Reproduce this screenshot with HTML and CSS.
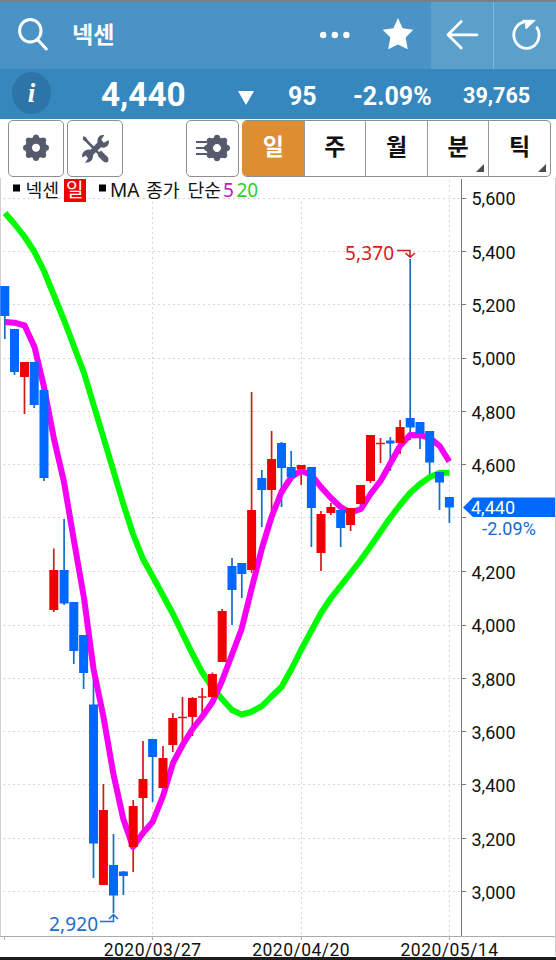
FILE: index.html
```html
<!DOCTYPE html>
<html lang="ko">
<head>
<meta charset="utf-8">
<title>넥센</title>
<link rel="stylesheet" href="styles.css">
</head>
<body>
<header class="topbar">
  <svg class="search" viewBox="0 0 32 34"><ellipse cx="12.3" cy="12.8" rx="10.7" ry="11.3"/><path d="M19.5 21.5L28.3 31"/></svg>
  <h1 class="title">넥센</h1>
  <svg class="more" viewBox="0 0 30 8"><circle cx="3.2" cy="4" r="3.2"/><circle cx="14.8" cy="4" r="3.2"/><circle cx="26.4" cy="4" r="3.2"/></svg>
  <svg class="star" viewBox="0 0 32 32"><path d="M16 0L20.6 10.2L31.3 11.7L23.6 19.6L25.8 31.2L16 26.6L6.2 31.2L8.4 19.6L.7 11.7L11.4 10.2Z"/></svg>
  <div class="nav">
    <button class="navbtn"><svg class="ic" viewBox="0 0 62 67"><path d="M46 32.8H17.5M30.2 19.5L17 32.8L30.2 46"/></svg></button>
    <button class="navbtn"><svg class="ic refresh" viewBox="0 0 62 67"><path d="M43 25.8A12.6 13.3 0 1 1 29.5 20.1"/><path class="solid" d="M29 18.3H41.2L32 27L31.5 21.5Z"/></svg></button>
  </div>
</header>
<section class="quote">
  <span class="info">i</span>
  <strong class="price">4,440</strong>
  <svg class="down" viewBox="0 0 16 14"><path d="M0 0H16L8 14Z"/></svg>
  <strong class="change">95</strong>
  <strong class="rate">-2.09%</strong>
  <strong class="volume">39,765</strong>
</section>
<nav class="toolbar">
  <button class="tool"><svg viewBox="0 0 54 55"><use href="#gear" x="27" y="26.7"/></svg></button>
  <button class="tool"><svg viewBox="0 0 54 55">
    <g class="dark">
      <path d="M15.3 15.2L17.8 16L19.8 19.3L32 32L30.3 33.7L17.8 21L14.8 18.5Z"/>
      <path d="M30 32.2L33 29.5L39.8 36.3Q41.5 39.5 39.3 41.3Q37 42.3 34.5 39.8L30 35Z"/>
      <path d="M36.4 14L33.3 18.5L35.8 21.8L40.8 19Q41.6 24.8 36.5 26.6Q34.5 27 33 26.3L25.2 33.8Q25.4 39.6 20.5 41.3L17 41.7L20 37.5L18 34.5L14.2 36.5Q13.3 30.7 18.8 28.8Q21 28.2 22.5 28.8L29.5 21.6Q28.8 15 34 14Z"/>
    </g></svg></button>
  <button class="tool settings"><svg viewBox="0 0 50 55"><path class="lines" d="M8.5 21H19.5M8.5 27H17M8.5 33H19.5"/><use href="#gear" x="29.5" y="27"/></svg></button>
  <div class="periods">
    <button class="period on">일</button>
    <button class="period">주</button>
    <button class="period">월</button>
    <button class="period sub">분</button>
    <button class="period sub">틱</button>
  </div>
</nav>
<svg class="chart" viewBox="0 178 556 782">
  <defs>
    <g id="gear">
      <circle class="ring" r="7.4"/>
      <g class="dark"><circle cy="-10.3" r="3"/><circle cy="10.3" r="3"/><circle cx="-10" r="3"/><circle cx="10" r="3"/><circle cx="7.2" cy="-7.2" r="3"/><circle cx="7.2" cy="7.2" r="3"/><circle cx="-7.2" cy="-7.2" r="3"/><circle cx="-7.2" cy="7.2" r="3"/></g>
    </g>
  </defs>
  <path class="grid" d="M3 198.5H461M3 251.5H461M3 304.5H461M3 358.5H461M3 411.5H461M3 464.5H461M3 517.5H461M3 571.5H461M3 625.5H461M3 678.5H461M3 731.5H461M3 784.5H461M3 838.5H461M3 891.5H461M152.5 202V936M301.5 202V936M449.5 180V936"/>
  <path class="edge" d="M.5 178V936M555.5 178V956"/>
  <path class="axis" d="M461.5 179V936"/>
  <path class="base" d="M0 936.5H555M4.5 936V940M152.5 936V940M301.5 936V940M449.5 936V940"/>
  <path class="axis" d="M461 198.5H466M461 251.5H466M461 304.5H466M461 358.5H466M461 411.5H466M461 464.5H466M461 517.5H466M461 571.5H466M461 625.5H466M461 678.5H466M461 731.5H466M461 784.5H466M461 838.5H466M461 891.5H466"/>
  <path class="wick up" d="M24.5 362V414M53.8 548.5V612M103.4 784V885M133.2 800V872M143 741V830M163 746V788M172.8 713V752M182.5 697V743M192.4 697V736M202.2 688V714M212.4 672.5V702M222.2 609V662M251.6 392V573M271.6 431V517M301.2 465V485M321 511V571M330.9 503V515M350.6 508V531M360.6 485V510M370.5 435V483M380.5 438V463M400.1 420V454"/>
  <path class="wick down-c" d="M4.8 286V339M14.5 329V375M34.2 362V408M44 390V481M64.1 519V605M73.8 602V664M83.6 635V689M93.5 674V878M113.5 834V913M123.4 871V895M152.6 739V802M232 558V625M241.8 563V598M261.8 470V527M281.5 442V507M291.2 451V477M311.4 467V547M340.7 507V547M390.3 437V471M410.2 259V440M420 422V449M429.7 431V475M439.5 472V510M449.4 497V523"/>
  <path class="ma ma20" d="M5 213L14.5 224L24 236L34 251L44 271L64 320L84 373L103 436L123 503L133 534L143 559L153 577L173 614L192 653L202 672L212 687L222 699L232 710L241.6 714.5L251 712L262 706L272 696L281.5 687L292 668L301 650L321 613L331 598L340.5 586L360 561L370 547L390 518L400 505L410 493L420 484L430 477L440 472.8H449.5"/>
  <path class="ma ma5" d="M5 322L14.5 322.7L24.6 325.5L34.5 347L44 387L54 439L64 482L74 541L84 598L93.5 669L103.3 716L113.4 774L123.3 819L133 847L143 833L152.6 822L163 796L173 763L182.6 745L192.5 729L202 717L212.5 702L222 681L241.6 629L251.5 589L262 548L271.5 517L281.5 492L291.4 477L301 470.7L311.4 475L321 487L331 498L340.6 507L350.5 512.5L361 509L370.5 494L380.5 481L390 464L400 446L410 435L420 435.2L430 438L439.7 446L449.2 461.5"/>
  <path class="body up" d="M24.5 362V377M53.8 570V610M103.4 810V885M133.2 806V847M143 779V798M163 758V788M172.8 718V745M192.4 698V717M212.4 674V697M222.2 611V662M251.6 510V570M271.6 459V490M301.2 465V469M321 514V553M330.9 507V513M350.6 508V525M360.6 485V504M370.5 435V481M400.1 427V443"/>
  <path class="body down-c" d="M4.8 286V316M14.5 329V372M34.2 362V405M44 390V478M64.1 570V603.5M73.8 602V651M83.6 635V673M93.5 704.5V843.5M113.5 865V895.5M123.4 871.5V876M152.6 739V757M232 566V590M241.8 563V574M261.8 478V490M281.5 443V468M291.2 467V477M311.4 467V508M340.7 510V528M410.2 418V427.5M420 422V433.5M429.7 431V462.5M439.5 472V482.5M449.4 497V507.5"/>
  <path class="wick up" d="M178 717.5H187M198 697H206.5M376 443.5H385"/>
  <path class="doji down-c" d="M386 442H394.5"/>
  <path class="arrow up" d="M397 250.5H410V256.5M405.5 253L410.2 257.2L415 253"/>
  <path class="arrow down-c" d="M100 921.5H113.5V915M109 919L113.5 914.5L118 919"/>
  <g class="axis-label">
    <text x="471.5" y="205">5,600</text><text x="471.5" y="258.5">5,400</text><text x="471.5" y="312">5,200</text><text x="471.5" y="365">5,000</text><text x="471.5" y="418.5">4,800</text><text x="471.5" y="472">4,600</text><text x="471.5" y="578.5">4,200</text><text x="471.5" y="632">4,000</text><text x="471.5" y="685.5">3,800</text><text x="471.5" y="738.5">3,600</text><text x="471.5" y="791.5">3,400</text><text x="471.5" y="845.5">3,200</text><text x="471.5" y="898.5">3,000</text>
  </g>
  <path class="floor" d="M0 958.5H556"/>
  <g class="dates">
    <text x="103.7" y="955.8" textLength="97.5">2020/03/27</text><text x="252.2" y="955.8" textLength="97.5">2020/04/20</text><text x="400.5" y="955.8" textLength="97.5">2020/05/14</text>
  </g>
  <path class="tag" d="M463 507.5L473 497.5H555V517H473Z"/>
  <text class="tag-text" x="471" y="513.5">4,440</text>
  <text class="rate-text" x="482" y="535" textLength="54">-2.09%</text>
  <text class="extreme high" x="345" y="259.5" textLength="49">5,370</text>
  <text class="extreme low" x="49" y="931" textLength="49">2,920</text>
  <path class="bullet" d="M13 184.5H20V191.5H13ZM99 184.5H106V191.5H99Z"/>
  <path class="daybox" d="M64 179H86V202H64Z"/>
  <g class="legend">
    <text x="25.5" y="196.5">넥센</text>
    <text class="day" x="66" y="196.5">일</text>
    <text class="ma-name" x="110" y="197" textLength="29.5">MA</text><text x="146" y="196.5">종가</text><text x="187.5" y="196.5">단순</text>
    <text class="five" x="223" y="197">5</text><text class="twenty" x="236.5" y="197">20</text>
  </g>
</svg>
</body>
</html>
```

FILE: styles.css
```css
* { box-sizing: border-box; }
body { margin: 0; width: 556px; height: 960px; overflow: hidden; background: #fff; font-family: Roboto, "Noto Sans CJK KR", sans-serif; color: #111; }
button { padding: 0; font: inherit; color: inherit; background: none; border: 0; }
svg { display: block; }

.topbar { display: flex; align-items: center; height: 69px; border-top: 2px solid #74808a; background: #4a93c6; color: #fff; }
.search { width: 32px; height: 34px; margin: -1px 0 0 18px; fill: none; stroke: #fff; stroke-width: 3; stroke-linecap: round; }
.title { width: 248px; margin: 0 0 6px 22px; font: 700 23px/36px "Noto Sans CJK KR", sans-serif; }
.more { width: 30px; height: 8px; margin-top: -1px; fill: #fff; }
.star { width: 32px; height: 32px; margin: -3px 0 0 32px; fill: #fff; }
.nav { display: flex; margin-left: auto; background: #5aa0cb; }
.navbtn { width: 62px; height: 67px; }
.navbtn + .navbtn { width: 63px; border-left: 1px solid #7db8dc; }
.ic { width: 62px; height: 67px; fill: none; stroke: #fff; stroke-width: 2.8; stroke-linecap: round; stroke-linejoin: round; }
.ic .solid { fill: #fff; stroke-width: 1; }

.quote { display: flex; align-items: center; height: 50px; background: #3587be; color: #fff; }
.info { width: 39px; height: 42px; margin: -2px 0 0 12px; border-radius: 50%; background: #2d74a7; text-align: center; font: italic 700 27px/42px "Liberation Serif", serif; }
.price { width: 137px; margin: 1px 0 0 50px; font-size: 33.3px; line-height: 40px; }
.down { width: 16px; height: 14px; margin-top: 7px; fill: #fff; }
.change { width: 65px; margin: 4px 0 0 34px; font-size: 25px; }
.rate { width: 110px; margin-top: 4px; font-size: 25px; }
.volume { margin-top: 3px; font-size: 21.6px; }

.toolbar { display: flex; height: 59px; padding: 1px 0 0 8px; }
.tool { width: 56px; height: 57px; margin-right: 3px; border: 1px solid #8f8f93; border-radius: 5px; }
.tool svg { width: 100%; height: 100%; }
.settings { width: 53px; margin: 0 3px 0 60px; }
.dark { fill: #555b6c; }
.ring { fill: none; stroke: #555b6c; stroke-width: 6.8; }
.lines { fill: none; stroke: #555b6c; stroke-width: 2; }
.periods { display: flex; width: 309px; height: 57px; border: 1px solid #8f8f93; border-left-color: #de8d30; border-radius: 5px; overflow: hidden; }
.period { position: relative; flex: 1; padding-bottom: 7px; font: 700 23px/36px "Noto Sans CJK KR", sans-serif; }
.period + .period { border-left: 1px solid #9a9a9e; }
.on { background: #de8d30; color: #fff; }
.sub::after { content: ""; position: absolute; right: 4px; bottom: 4px; border-left: 8px solid transparent; border-bottom: 8px solid #4b4c52; }

.chart { width: 556px; height: 782px; overflow: visible; }
.chart path { fill: none; }
.chart .grid { stroke: #d6d6d6; stroke-width: 1; stroke-dasharray: 2 3; }
.chart .edge { stroke: #d0d0d0; }
.chart .axis { stroke: #777; }
.chart .base { stroke: #aaa; }
.chart .floor { stroke: #1c1c1e; stroke-width: 3; }
.up { stroke: #f00000; }
.down-c { stroke: #0068ff; }
.wick { stroke-width: 1.7; }
.wick.up { stroke: #cf1b1b; }
.wick.down-c { stroke: #166dc2; }
.body { stroke-width: 9; }
.doji { stroke-width: 3; }
.ma { stroke-width: 6; stroke-linejoin: round; }
.ma20 { stroke: #00fa00; }
.ma5 { stroke: #f500f5; }
.arrow { stroke-width: 1.5; }
.arrow.up { stroke: #d51b1b; }
.arrow.down-c { stroke: #1c6dcc; }
.axis-label { font-size: 18px; fill: #111; }
.dates { font-size: 17.5px; fill: #111; }
.chart .tag { fill: #0068ff; }
.tag-text { font-size: 18px; fill: #fff; }
.rate-text { font-size: 18px; fill: #1769cc; }
.extreme { font-family: "Noto Sans", sans-serif; font-size: 19px; }
.high { fill: #d51b1b; }
.low { fill: #1c6dcc; }
.chart .bullet { fill: #000; }
.chart .daybox { fill: #f00000; }
.legend { font: 18.3px "Noto Sans CJK KR", sans-serif; fill: #111; }
.day { font-size: 19px; fill: #fff; }
.ma-name, .five, .twenty { font-family: "Noto Sans", sans-serif; font-size: 19px; }
.five { fill: #c914c9; }
.twenty { fill: #28d228; }
```
